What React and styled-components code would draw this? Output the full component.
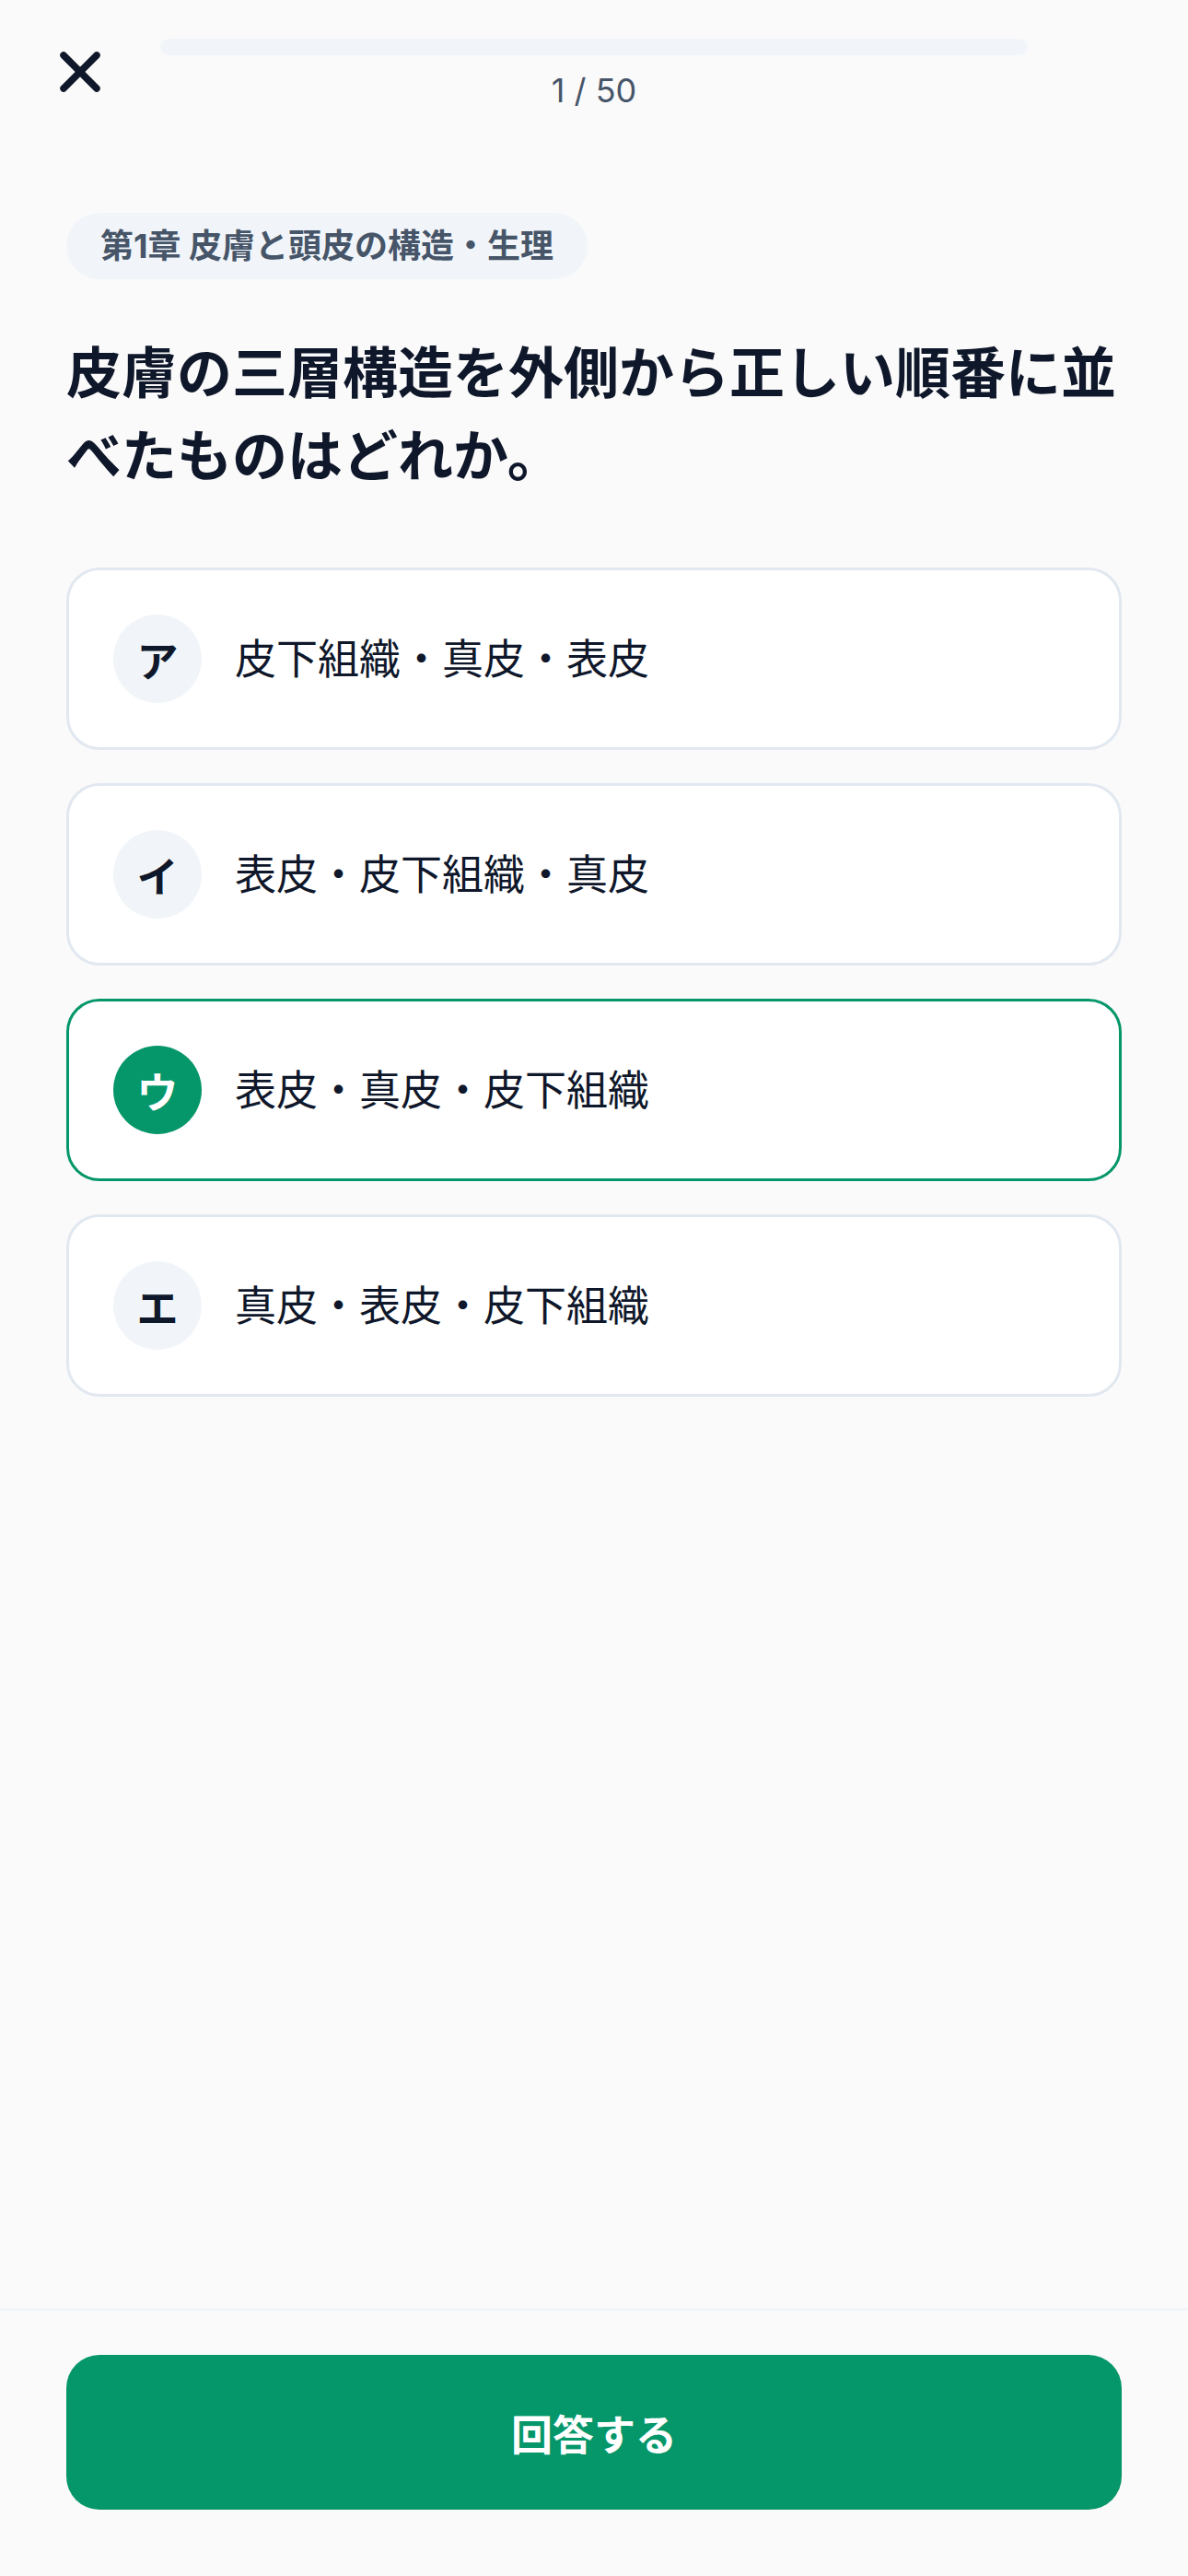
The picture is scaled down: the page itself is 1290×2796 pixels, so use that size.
import { useState } from "react";
import styled, { createGlobalStyle } from "styled-components";
import { X } from "lucide-react";

const GlobalStyle = createGlobalStyle`
  * {
    box-sizing: border-box;
  }
  html, body {
    margin: 0;
    padding: 0;
    background: #fafafa;
  }
  body {
    font-family: Inter, "Noto Sans CJK JP", sans-serif;
    color: #0f172a;
  }
`;

const Screen = styled.div`
  display: flex;
  flex-direction: column;
  width: 1290px;
  min-height: 2796px;
  background: #fafafa;
`;

const Header = styled.header`
  display: flex;
  align-items: flex-start;
  gap: 48px;
  padding: 42px 48px 0;
`;

const CloseButton = styled.button`
  display: flex;
  align-items: center;
  justify-content: center;
  width: 78px;
  height: 72px;
  padding: 0;
  border: none;
  background: transparent;
  color: #0f172a;
  cursor: pointer;
`;

const Spacer = styled.div`
  width: 78px;
  flex-shrink: 0;
`;

const ProgressColumn = styled.div`
  flex: 1;
  display: flex;
  flex-direction: column;
  align-items: center;
  gap: 14px;
`;

const Track = styled.div`
  width: 100%;
  height: 18px;
  border-radius: 9px;
  background: #f1f5f9;
  overflow: hidden;
`;

const Fill = styled.div`
  height: 100%;
  background: #059669;
  border-radius: 9px;
`;

const Counter = styled.div`
  font-size: 36px;
  line-height: 48px;
  color: #475569;
`;

const Main = styled.main`
  flex: 1;
  display: flex;
  flex-direction: column;
  align-items: flex-start;
  padding: 109px 72px 0;
`;

const Chip = styled.div`
  display: inline-flex;
  align-items: center;
  height: 72px;
  padding: 0 37px;
  border-radius: 36px;
  background: #f1f5f9;
  color: #475569;
  font-size: 36px;
  font-weight: 700;
  line-height: 1;
`;

const Question = styled.h1`
  margin: 57px 0 0;
  font-size: 60px;
  font-weight: 700;
  line-height: 90px;
  color: #0f172a;
`;

const Options = styled.div`
  width: 100%;
  display: flex;
  flex-direction: column;
  gap: 36px;
  margin-top: 76px;
`;

const OptionCard = styled.button`
  display: flex;
  align-items: center;
  gap: 36px;
  width: 100%;
  padding: 48px;
  border: 3px solid ${(p) => (p.$selected ? "#059669" : "#e2e8f0")};
  border-radius: 36px;
  background: #ffffff;
  font-family: inherit;
  text-align: left;
  cursor: pointer;
`;

const Badge = styled.span`
  display: flex;
  align-items: center;
  justify-content: center;
  flex-shrink: 0;
  width: 96px;
  height: 96px;
  border-radius: 50%;
  background: ${(p) => (p.$selected ? "#059669" : "#f1f5f9")};
  color: ${(p) => (p.$selected ? "#ffffff" : "#0f172a")};
  font-size: 45px;
  font-weight: 700;
`;

const OptionText = styled.span`
  font-size: 45px;
  line-height: 1.4;
  color: #0f172a;
`;

const Footer = styled.footer`
  border-top: 3px solid #f1f5f9;
  padding: 48px 72px 72px;
`;

const SubmitButton = styled.button`
  width: 100%;
  height: 168px;
  border: none;
  border-radius: 36px;
  background: #059669;
  color: #ffffff;
  font-family: inherit;
  font-size: 45px;
  font-weight: 700;
  cursor: pointer;
`;

const choices = [
  { key: "ア", text: "皮下組織・真皮・表皮" },
  { key: "イ", text: "表皮・皮下組織・真皮" },
  { key: "ウ", text: "表皮・真皮・皮下組織" },
  { key: "エ", text: "真皮・表皮・皮下組織" },
];

const App = () => {
  const [selected, setSelected] = useState("ウ");
  const current = 1;
  const total = 50;

  return (
    <>
      <GlobalStyle />
      <Screen>
        <Header>
          <CloseButton aria-label="閉じる">
            <X size={72} strokeWidth={2.5} />
          </CloseButton>
          <ProgressColumn>
            <Track>
              <Fill style={{ width: `${((current - 1) / total) * 100}%` }} />
            </Track>
            <Counter>
              {current} / {total}
            </Counter>
          </ProgressColumn>
          <Spacer />
        </Header>
        <Main>
          <Chip>第1章 皮膚と頭皮の構造・生理</Chip>
          <Question>皮膚の三層構造を外側から正しい順番に並べたものはどれか。</Question>
          <Options>
            {choices.map((c) => (
              <OptionCard
                key={c.key}
                $selected={selected === c.key}
                onClick={() => setSelected(c.key)}
              >
                <Badge $selected={selected === c.key}>{c.key}</Badge>
                <OptionText>{c.text}</OptionText>
              </OptionCard>
            ))}
          </Options>
        </Main>
        <Footer>
          <SubmitButton>回答する</SubmitButton>
        </Footer>
      </Screen>
    </>
  );
};

export default App;
